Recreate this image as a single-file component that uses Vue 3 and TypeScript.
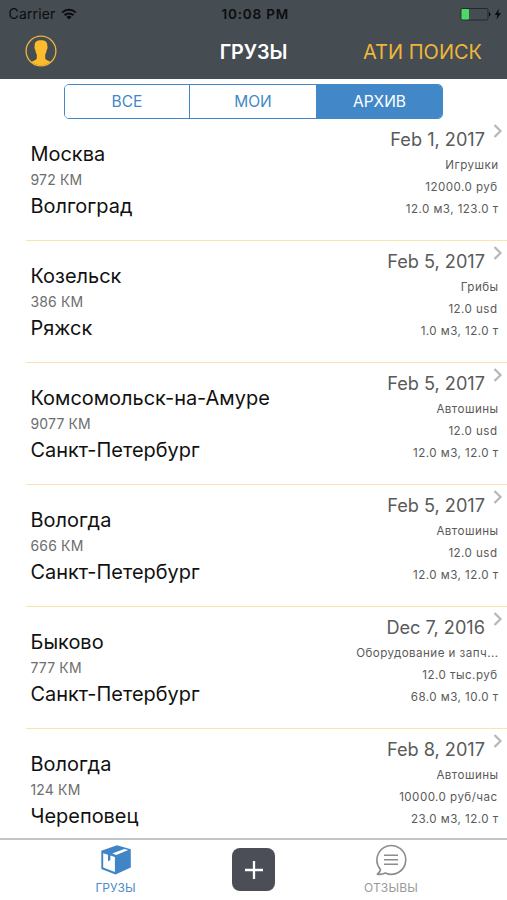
<script setup lang="ts">
import { ref } from 'vue'

interface Cargo {
  from: string
  to: string
  km: number
  date: string
  goods: string
  price: string
  size: string
}

const tabs: string[] = ['ВСЕ', 'МОИ', 'АРХИВ']
const active = ref<number>(2)

const cargos: Cargo[] = [
  { from: 'Москва', to: 'Волгоград', km: 972, date: 'Feb 1, 2017', goods: 'Игрушки', price: '12000.0 руб', size: '12.0 м3, 123.0 т' },
  { from: 'Козельск', to: 'Ряжск', km: 386, date: 'Feb 5, 2017', goods: 'Грибы', price: '12.0 usd', size: '1.0 м3, 12.0 т' },
  { from: 'Комсомольск-на-Амуре', to: 'Санкт-Петербург', km: 9077, date: 'Feb 5, 2017', goods: 'Автошины', price: '12.0 usd', size: '12.0 м3, 12.0 т' },
  { from: 'Вологда', to: 'Санкт-Петербург', km: 666, date: 'Feb 5, 2017', goods: 'Автошины', price: '12.0 usd', size: '12.0 м3, 12.0 т' },
  { from: 'Быково', to: 'Санкт-Петербург', km: 777, date: 'Dec 7, 2016', goods: 'Оборудование и запч...', price: '12.0 тыс.руб', size: '68.0 м3, 10.0 т' },
  { from: 'Вологда', to: 'Череповец', km: 124, date: 'Feb 8, 2017', goods: 'Автошины', price: '10000.0 руб/час', size: '23.0 м3, 12.0 т' },
]
</script>

<template>
  <div class="screen">
    <header class="top">
      <div class="status">
        <div class="carrier">
          <span>Carrier</span>
          <svg width="16" height="12" viewBox="0 0 16 12">
            <g fill="none" stroke="#0c0d0e" stroke-width="2">
              <path d="M1.2 4.6a9.8 9.8 0 0 1 13.6 0" />
              <path d="M3.6 7.2a6.3 6.3 0 0 1 8.8 0" />
            </g>
            <path d="M8 11.6 5.4 9a3.7 3.7 0 0 1 5.2 0z" fill="#0c0d0e" />
          </svg>
        </div>
        <span class="time">10:08 PM</span>
        <svg class="battery" width="42" height="14" viewBox="0 0 42 14">
          <rect x="1" y="1.5" width="27" height="11.5" rx="1.5" fill="none" stroke="#24292c" />
          <rect x="1.5" y="2" width="7.5" height="10.5" rx="1" fill="#4cd964" />
          <path d="M29 5a2.400 2.400 0 0 1 0 4.400z" fill="#0c0d0e" />
          <path d="M38.800 1.800 34.800 8h2.600l-1 4.800L41 6h-2.700z" fill="#0c0d0e" />
        </svg>
      </div>
      <nav class="nav">
        <svg class="user" width="32" height="32" viewBox="0 0 32 32">
          <circle cx="16" cy="16" r="14.900" fill="none" stroke="#f0b536" stroke-width="1.300" />
          <path
            d="M16 5.200c4.700 0 6.600 1.900 6.300 6 .6.500.2 2.700-.6 3.500-.2 2-.8 3.700-1.500 4.800v4c.5 1.700 3 2.100 5.300 3.300a14.500 14.500 0 0 1-19 0c2.300-1.200 4.800-1.600 5.300-3.300v-4c-.7-1.100-1.300-2.800-1.500-4.800-.8-.8-1.200-3-.6-3.500C9.400 7.100 11.300 5.200 16 5.200z"
            fill="#fdbc2c"
          />
        </svg>
        <h1 class="title">ГРУЗЫ</h1>
        <span class="search">АТИ ПОИСК</span>
      </nav>
    </header>

    <div class="segments">
      <button
        v-for="(tab, i) in tabs"
        :key="tab"
        type="button"
        class="segment"
        :class="{ on: active === i }"
        @click="active = i"
      >{{ tab }}</button>
    </div>

    <main class="list">
      <article v-for="(c, i) in cargos" :key="i" class="row">
        <div class="route">
          <div class="city">{{ c.from }}</div>
          <div class="km">{{ c.km }} КМ</div>
          <div class="city">{{ c.to }}</div>
        </div>
        <div class="info">
          <div class="date">{{ c.date }}</div>
          <div class="detail">{{ c.goods }}</div>
          <div class="detail price">{{ c.price }}</div>
          <div class="detail">{{ c.size }}</div>
        </div>
        <svg class="chevron" width="10" height="16" viewBox="0 0 10 16">
          <path d="M1.500 2l6 6-6 6" fill="none" stroke="#b9b9bb" stroke-width="2.300" />
        </svg>
      </article>
    </main>

    <footer class="tabbar">
      <div class="tab blue">
        <svg width="32" height="32" viewBox="0 0 32 32">
          <path d="M1.300 6.800 17 1.200 30.800 5.200v18.300L15.500 30.400 1.300 25z" fill="#4086c6" />
          <path d="M3.200 9.300l4.800 1.500v6.400l2.400-1.300v-4.300l4.500 1.400v15L3.200 23.600z" fill="#fff" />
          <path d="M12.300 9.500 24.300 4.900l4 1.200L16.200 10.900z" fill="#fff" />
        </svg>
        <span>ГРУЗЫ</span>
      </div>
      <button type="button" class="add" aria-label="+">
        <svg width="20" height="20" viewBox="0 0 20 20">
          <path d="M10 1v18M1 10h18" stroke="#fff" stroke-width="2.300" />
        </svg>
      </button>
      <div class="tab gray">
        <svg width="32" height="32" viewBox="0 0 32 32">
          <path
            d="M5.400 25.300A14.400 14.400 0 1 1 10.300 29C8 30.300 5 30.600 2.300 30.200 4.200 28.900 5.400 27.200 5.400 25.300z"
            fill="none" stroke="#8c8c8c" stroke-width="1.600" stroke-linejoin="round"
          />
          <path d="M9 11.300h14M9 15.800h14M9 20.300h14" stroke="#8c8c8c" stroke-width="1.600" />
        </svg>
        <span>ОТЗЫВЫ</span>
      </div>
    </footer>
  </div>
</template>

<style>
body {
  margin: 0;
  background: #fff;
}
</style>

<style scoped>
.screen {
  width: 507px;
  height: 900px;
  display: flex;
  flex-direction: column;
  overflow: hidden;
  background: #fff;
  font-family: Inter, Roboto, sans-serif;
}
button {
  font: inherit;
  border: 0;
  padding: 0;
  margin: 0;
}
.top {
  flex: none;
  height: 79px;
  background: #454c52;
}
.status {
  height: 27px;
  display: grid;
  grid-template-columns: 1fr auto 1fr;
  align-items: center;
  color: #0c0d0e;
  font-size: 14px;
  padding: 0 5px 0 8.500px;
}
.carrier {
  display: flex;
  align-items: center;
  gap: 6px;
  letter-spacing: 0.15px;
}
.time {
  font-weight: 600;
  font-size: 13.5px;
  letter-spacing: 0.800px;
}
.battery {
  justify-self: end;
}
.nav {
  height: 50px;
  display: grid;
  grid-template-columns: 1fr auto 1fr;
  align-items: center;
  padding: 0 25px;
}
.user {
  margin-top: -3px;
}
.title {
  margin: 0;
  font-size: 19.800px;
  font-weight: 600;
  letter-spacing: -0.100px;
  color: #fff;
}
.search {
  justify-self: end;
  font-size: 20px;
  color: #efb63a;
}
.segments {
  flex: none;
  width: 379px;
  height: 35px;
  box-sizing: border-box;
  margin: 5px 0 0 64px;
  display: grid;
  grid-template-columns: 124px 127px 126px;
  border: 1px solid #4288c8;
  border-radius: 5px;
  overflow: hidden;
}
.segment {
  background: #fff;
  color: #4288c8;
  font-size: 15.500px;
}
.segment + .segment {
  border-left: 1px solid #4288c8;
}
.segment.on {
  background: #4288c8;
  color: #fff;
}
.list {
  flex: none;
  height: 719px;
  overflow: hidden;
}
.row {
  height: 122.150px;
  box-sizing: border-box;
  margin-left: 25.500px;
  display: flex;
  border-bottom: 1px solid #fae3b0;
}
.row:first-child {
  height: 121.800px;
}
.route {
  flex: 1;
  padding: 22px 0 0 5px;
  line-height: 26px;
  white-space: nowrap;
}
.city {
  font-size: 19.950px;
  color: #111;
}
.km {
  font-size: 14px;
  letter-spacing: 0.150px;
  line-height: 25px;
  margin-bottom: 1px;
  color: #6e6e6e;
}
.info {
  padding-top: 7px;
  text-align: right;
  white-space: nowrap;
  color: #5a5a5a;
}
.date {
  font-size: 18.150px;
  line-height: 26px;
  margin: 0 5px 2px 0;
}
.detail {
  font-size: 11.600px;
  line-height: 22px;
  letter-spacing: 0.450px;
  margin-right: -8.500px;
}
.detail.price {
  margin-right: -7.500px;
}
.chevron {
  flex: none;
  margin: 4px 4.500px 0 2.500px;
}
.tabbar {
  flex: none;
  height: 62px;
  box-sizing: border-box;
  border-top: 2px solid #c4c4c4;
  background: #fff;
  display: grid;
  grid-template-columns: 231px 44px 232px;
}
.tab {
  display: flex;
  flex-direction: column;
  align-items: center;
  padding-top: 4px;
  font-size: 12px;
  line-height: 23px;
}
.tab.blue {
  color: #4a8ccb;
}
.tab.gray {
  color: #999;
  letter-spacing: 0.200px;
}
.add {
  width: 43px;
  height: 43px;
  margin: 8px 0 0 1px;
  border-radius: 8px;
  background: #4b4e56;
  display: flex;
  align-items: center;
  justify-content: center;
}
</style>
